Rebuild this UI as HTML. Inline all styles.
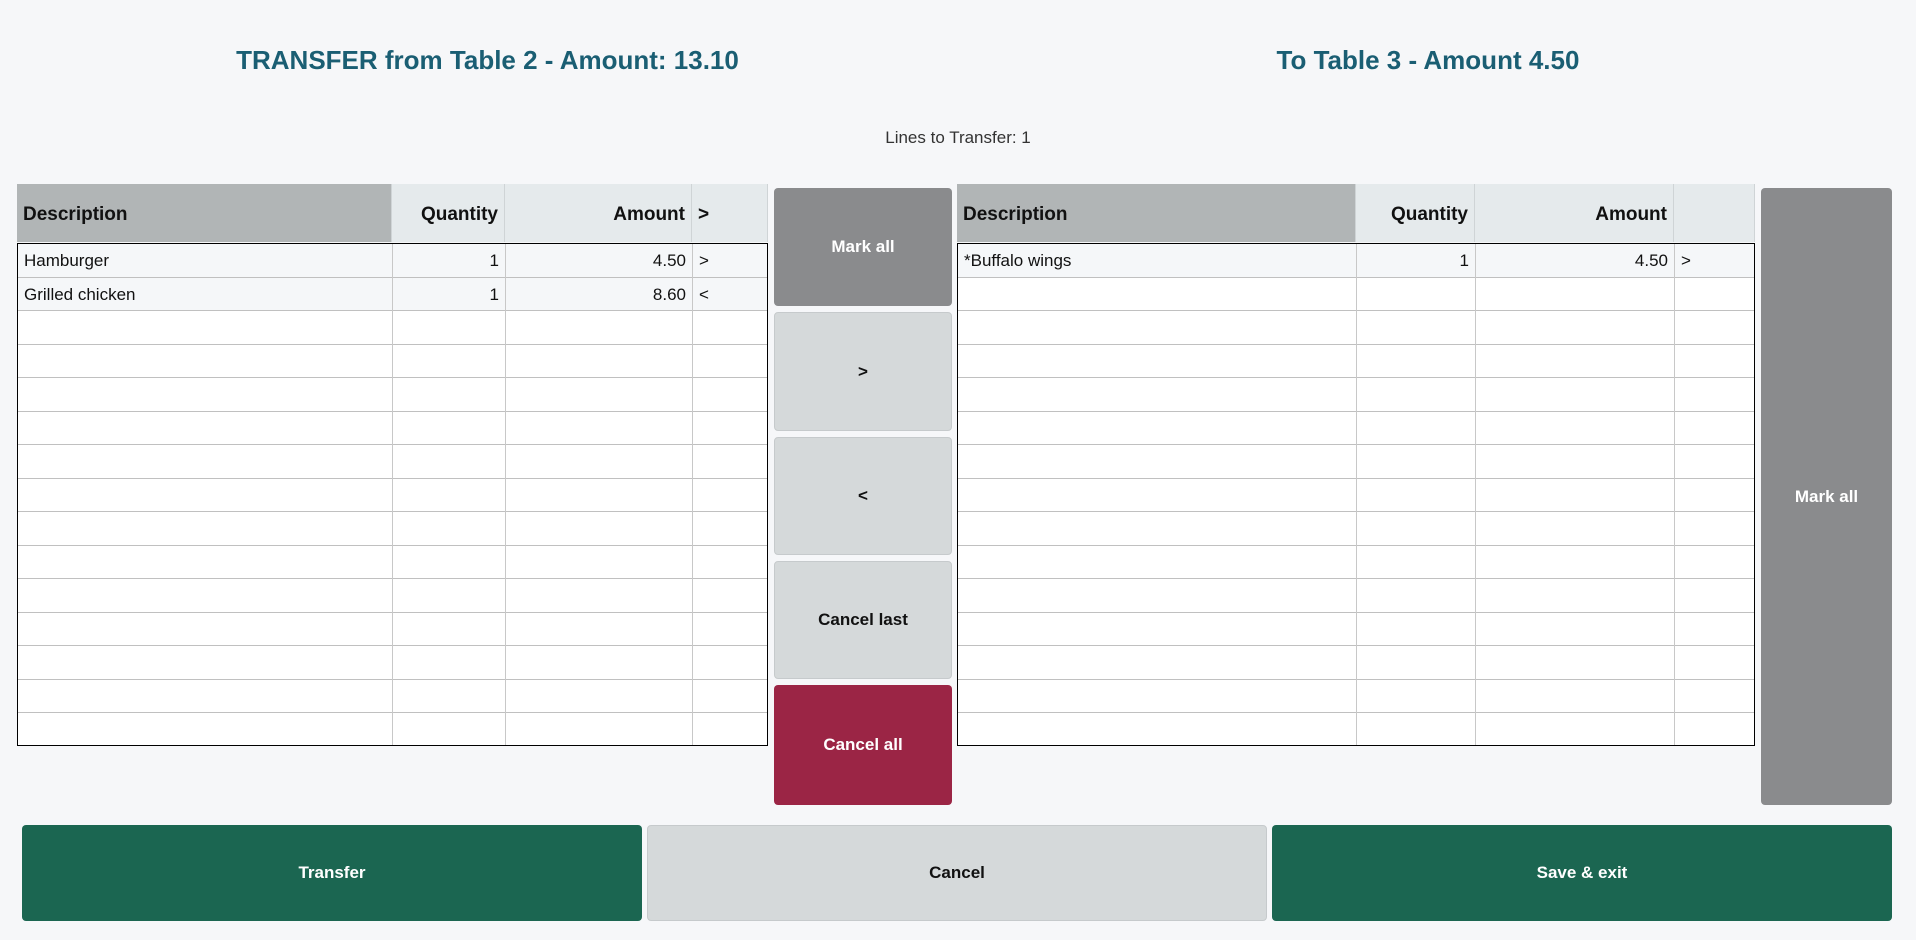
<!DOCTYPE html>
<html><head><meta charset="utf-8"><style>
*{box-sizing:border-box;margin:0;padding:0}
body{width:1916px;height:940px;background:#f6f7f9;font-family:"Liberation Sans",sans-serif;position:relative;overflow:hidden;color:#111}
.t{position:absolute;top:45px;font-size:26px;font-weight:bold;color:#1a5e73;text-align:center}
.sub{position:absolute;top:128px;left:0;width:1916px;text-align:center;font-size:17px;color:#333}
.tbl{position:absolute;top:184px}
.hd{position:absolute;top:0;height:58px;background:#e5eaec;border-right:1px solid #cfd4d6;font-weight:bold;font-size:19px;line-height:62px;padding:0 6px}
.body{position:absolute;top:59px;height:503px;border:1px solid #000;background:#fff;overflow:hidden}
.row{position:absolute;left:0;right:0;height:33.5px;border-bottom:1px solid #c0c0c0}
.vl{position:absolute;top:0;bottom:0;width:1px;background:#c8c8c8}
.c{position:absolute;font-size:17px;line-height:33px;padding:0 6px}
.btn{position:absolute;border-radius:4px;font-weight:bold;font-size:17px;display:flex;align-items:center;justify-content:center}
.g{background:#8a8b8d;color:#fff}
.l{background:#d5d9da;border:1px solid #c6cacc;color:#111}
.r{background:#9b2545;color:#fff}
.gr{background:#1b6651;color:#fff}
</style></head><body>
<div class="t" style="left:0;width:975px">TRANSFER from Table 2 - Amount: 13.10</div>
<div class="t" style="left:958px;width:940px">To Table 3 - Amount 4.50</div>
<div class="sub">Lines to Transfer: 1</div>

<div class="tbl" style="left:17px;width:751px;height:562px">
<div class="hd" style="left:0;width:375px;background:#b1b5b6">Description</div>
<div class="hd" style="left:375px;width:113px;text-align:right">Quantity</div>
<div class="hd" style="left:488px;width:187px;text-align:right">Amount</div>
<div class="hd" style="left:675px;width:76px">&gt;</div>
<div class="body" style="left:0;width:751px">
<div class="row" style="top:0;background:#f5f7f9"></div>
<div class="row" style="top:33.5px;background:#f5f7f9"></div>
<div class="row" style="top:67px"></div><div class="row" style="top:100.5px"></div><div class="row" style="top:134px"></div><div class="row" style="top:167.5px"></div><div class="row" style="top:201px"></div><div class="row" style="top:234.5px"></div><div class="row" style="top:268px"></div><div class="row" style="top:301.5px"></div><div class="row" style="top:335px"></div><div class="row" style="top:368.5px"></div><div class="row" style="top:402px"></div><div class="row" style="top:435.5px"></div>
<div class="vl" style="left:374px"></div><div class="vl" style="left:487px"></div><div class="vl" style="left:674px"></div>
<div class="c" style="top:0;left:0">Hamburger</div>
<div class="c" style="top:0;left:375px;width:112px;text-align:right">1</div>
<div class="c" style="top:0;left:488px;width:186px;text-align:right">4.50</div>
<div class="c" style="top:0;left:675px">&gt;</div>
<div class="c" style="top:33.5px;left:0">Grilled chicken</div>
<div class="c" style="top:33.5px;left:375px;width:112px;text-align:right">1</div>
<div class="c" style="top:33.5px;left:488px;width:186px;text-align:right">8.60</div>
<div class="c" style="top:33.5px;left:675px">&lt;</div>
</div></div>

<div class="tbl" style="left:957px;width:798px;height:562px">
<div class="hd" style="left:0;width:399px;background:#b1b5b6">Description</div>
<div class="hd" style="left:399px;width:119px;text-align:right">Quantity</div>
<div class="hd" style="left:518px;width:199px;text-align:right">Amount</div>
<div class="hd" style="left:717px;width:81px"></div>
<div class="body" style="left:0;width:798px">
<div class="row" style="top:0;background:#f5f7f9"></div>
<div class="row" style="top:33.5px"></div><div class="row" style="top:67px"></div><div class="row" style="top:100.5px"></div><div class="row" style="top:134px"></div><div class="row" style="top:167.5px"></div><div class="row" style="top:201px"></div><div class="row" style="top:234.5px"></div><div class="row" style="top:268px"></div><div class="row" style="top:301.5px"></div><div class="row" style="top:335px"></div><div class="row" style="top:368.5px"></div><div class="row" style="top:402px"></div><div class="row" style="top:435.5px"></div>
<div class="vl" style="left:398px"></div><div class="vl" style="left:517px"></div><div class="vl" style="left:716px"></div>
<div class="c" style="top:0;left:0">*Buffalo wings</div>
<div class="c" style="top:0;left:399px;width:118px;text-align:right">1</div>
<div class="c" style="top:0;left:518px;width:198px;text-align:right">4.50</div>
<div class="c" style="top:0;left:717px">&gt;</div>
</div></div>

<div class="btn g" style="left:774px;top:188px;width:178px;height:118px">Mark all</div>
<div class="btn l" style="left:774px;top:312px;width:178px;height:119px">&gt;</div>
<div class="btn l" style="left:774px;top:437px;width:178px;height:118px">&lt;</div>
<div class="btn l" style="left:774px;top:561px;width:178px;height:118px">Cancel last</div>
<div class="btn r" style="left:774px;top:685px;width:178px;height:120px">Cancel all</div>
<div class="btn g" style="left:1761px;top:188px;width:131px;height:617px">Mark all</div>

<div class="btn gr" style="left:22px;top:825px;width:620px;height:96px">Transfer</div>
<div class="btn l" style="left:647px;top:825px;width:620px;height:96px">Cancel</div>
<div class="btn gr" style="left:1272px;top:825px;width:620px;height:96px">Save &amp; exit</div>
</body></html>
